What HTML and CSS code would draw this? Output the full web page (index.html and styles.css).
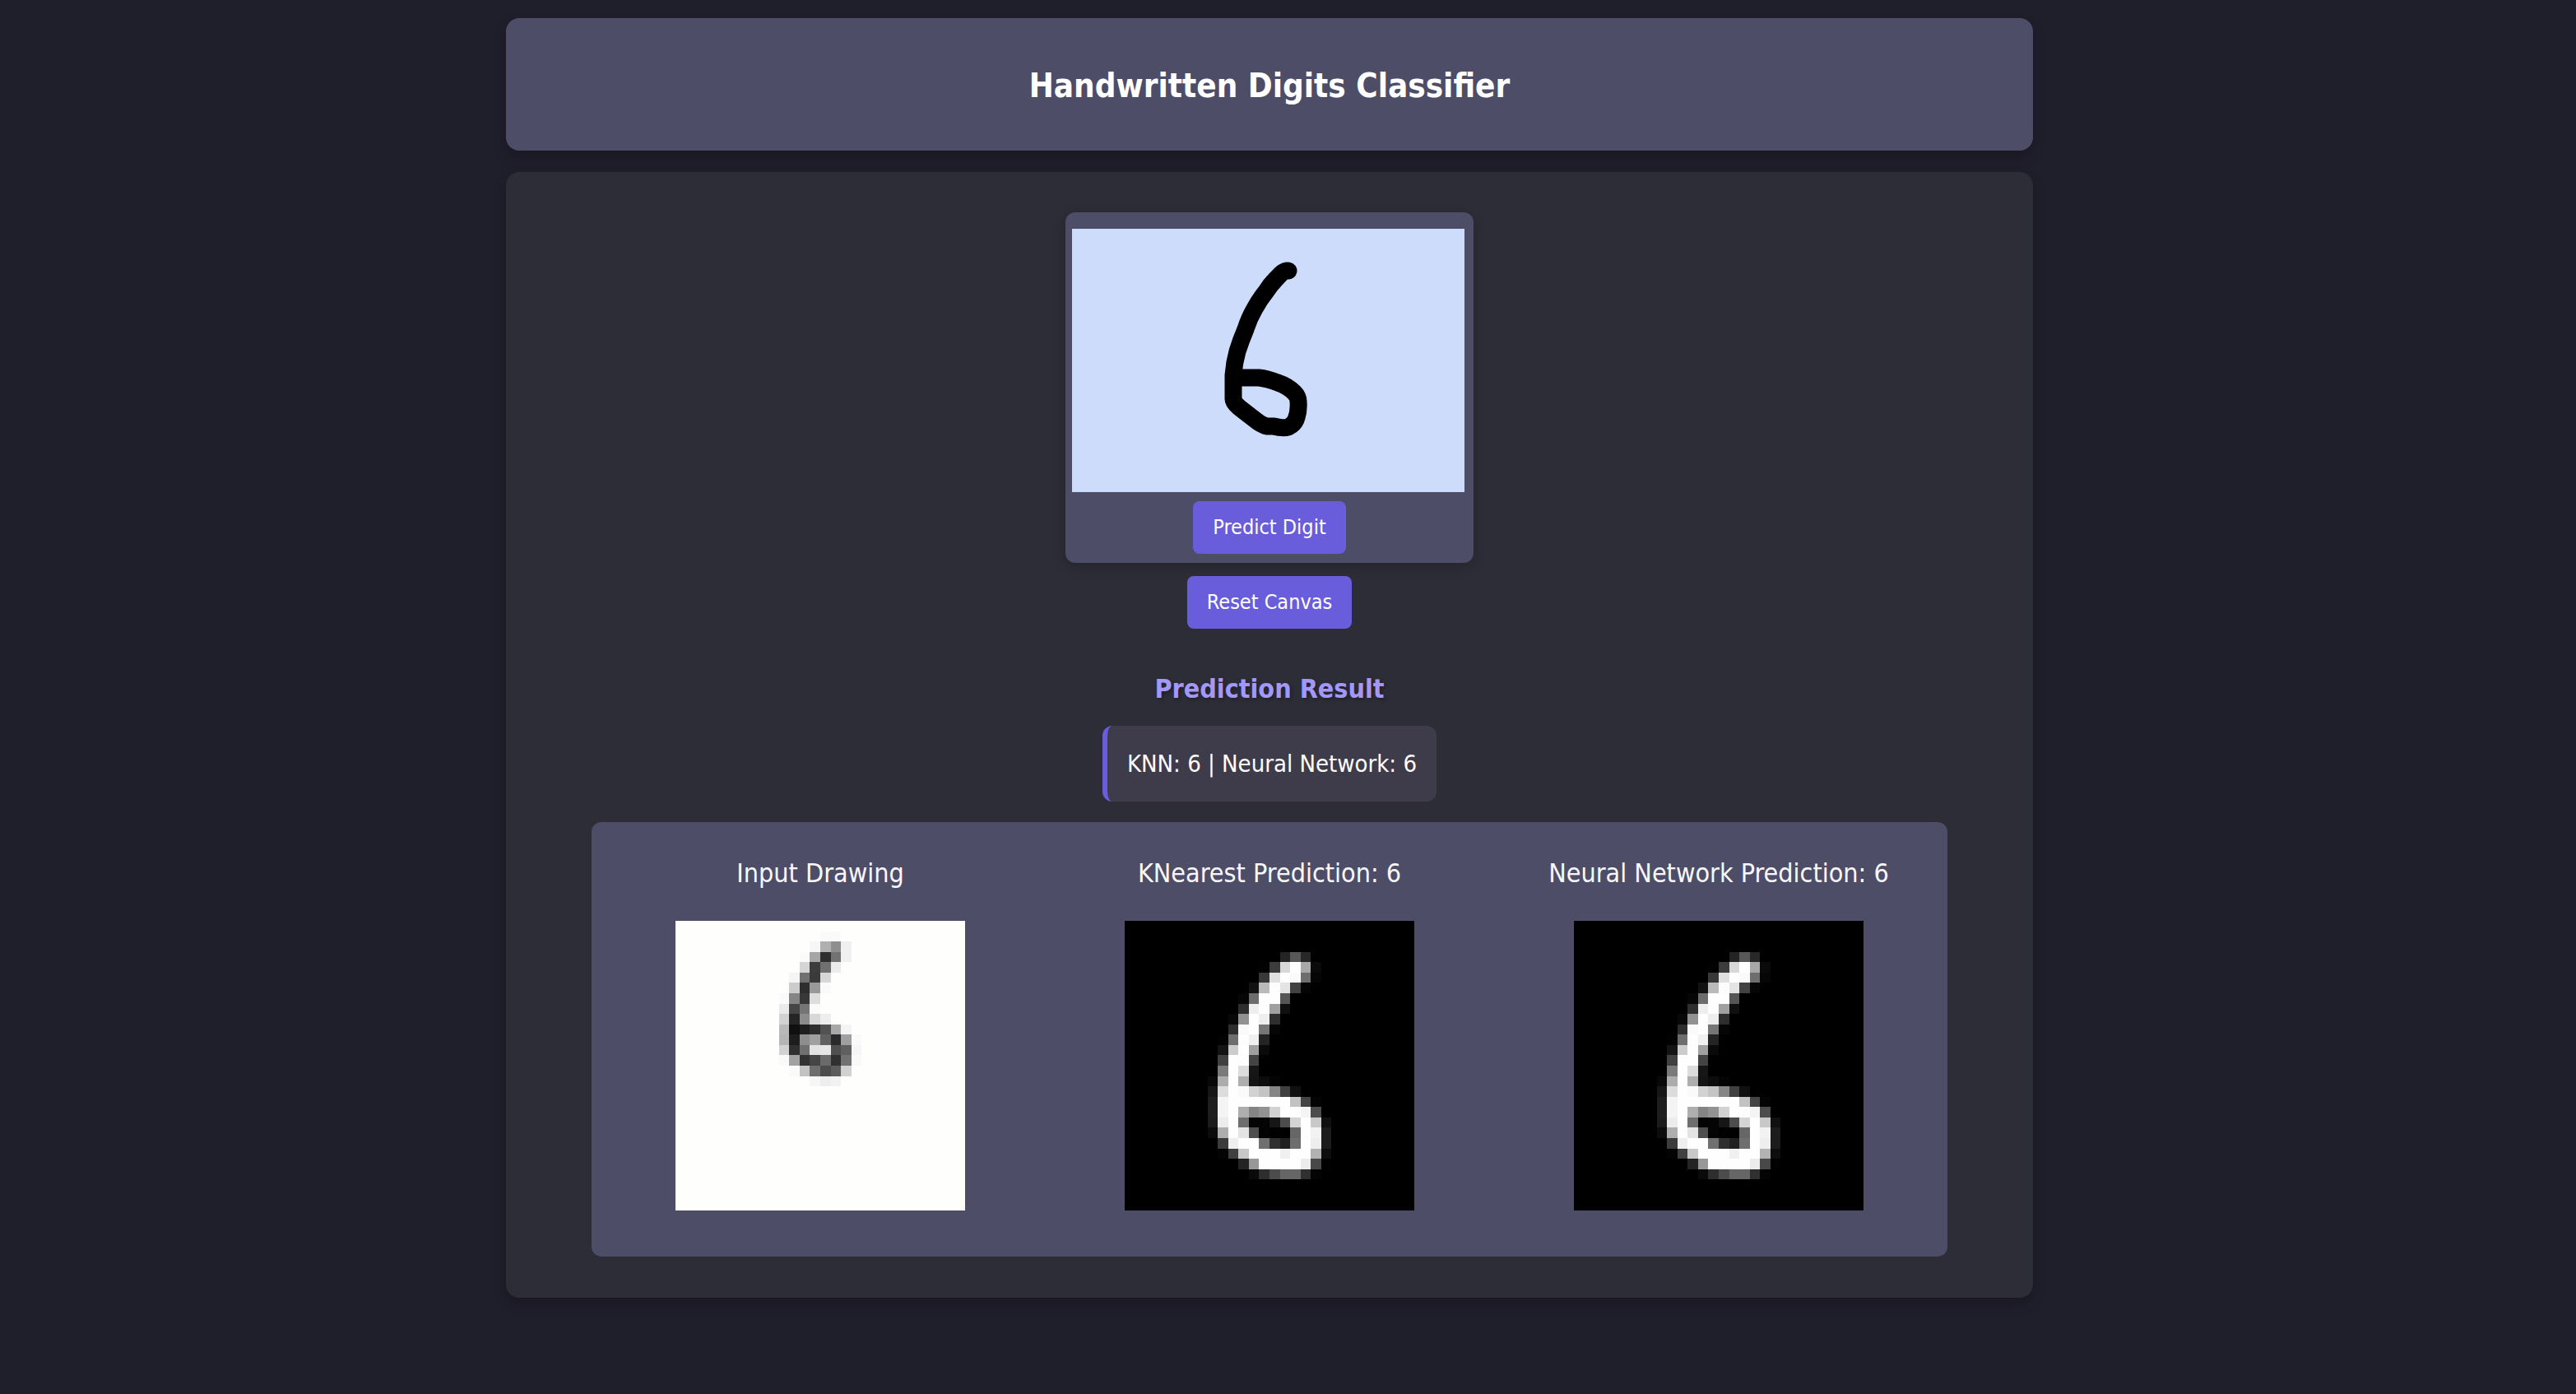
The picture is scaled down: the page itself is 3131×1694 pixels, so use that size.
FILE: index.html
```html
<!DOCTYPE html>
<html lang="en">
<head>
  <meta charset="utf-8">
  <meta name="viewport" content="width=device-width, initial-scale=1">
  <title>Handwritten Digits Classifier</title>
  <link rel="stylesheet" href="styles.css">
</head>
<body>
  <div class="page">
    <header class="header">
      <h1 class="title">Handwritten Digits Classifier</h1>
    </header>
    <main class="main">
      <form class="draw-card">
        <svg class="draw-area" viewBox="0 0 477 320" role="img" aria-label="Drawing canvas">
          <path class="stroke" d="M263 51C257 50 253 56 247 62Q241 68 236 76Q228 86 222 97Q215 109 211 122Q205 136 201 149Q197 163 196 178V207Q196 211 203 217L225 234Q232 239 237 240H245Q256 243 263 241Q270 237 272 232Q276 222 275 210Q275 204 270 199Q262 191 250 187Q237 182 227 181H196"/>
        </svg>
        <button class="button" type="button">Predict Digit</button>
      </form>
      <button class="button reset" type="button">Reset Canvas</button>
      <h2 class="result-title">Prediction Result</h2>
      <p class="result">KNN: 6 | Neural Network: 6</p>
      <section class="plots">
        <figure class="plot">
          <figcaption class="caption">Input Drawing</figcaption>
          <svg class="pixels paper" viewBox="0 0 28 28" data-digit="input" role="img" aria-label="Input drawing"></svg>
        </figure>
        <figure class="plot">
          <figcaption class="caption">KNearest Prediction: 6</figcaption>
          <svg class="pixels" viewBox="0 0 28 28" data-digit="scaled" role="img" aria-label="KNearest digit"></svg>
        </figure>
        <figure class="plot">
          <figcaption class="caption">Neural Network Prediction: 6</figcaption>
          <svg class="pixels" viewBox="0 0 28 28" data-digit="scaled" role="img" aria-label="Neural network digit"></svg>
        </figure>
      </section>
    </main>
  </div>
  <script src="digits.js"></script>
</body>
</html>
```
FILE: styles.css
```css
* {
  box-sizing: border-box;
}

body {
  margin: 0;
  padding: 22px 45px 22px 0;
  min-height: 100vh;
  background: #1f1e2b;
  color: #fff;
  font-family: Tahoma, "DejaVu Sans Condensed", "DejaVu Sans", sans-serif;
}

.page {
  display: flex;
  flex-direction: column;
  gap: 26px;
  max-width: 1856px;
  margin: 0 auto;
}

.header,
.main {
  border-radius: 16px;
  box-shadow: 0 8px 16px rgba(0, 0, 0, 0.2);
}

.header {
  padding: 58px 40px 55px;
  background: #4e4d68;
  text-align: center;
}

.title {
  margin: 0;
  font-size: 40px;
  line-height: 48px;
}

.main {
  display: flex;
  flex-direction: column;
  align-items: center;
  padding: 49px 104px 50px;
  background: #2d2d38;
}

.draw-card {
  display: flex;
  flex-direction: column;
  align-items: center;
  gap: 11px;
  width: 496px;
  max-width: 100%;
  padding: 20px 8px 11px;
  border-radius: 12px;
  background: #4e4d68;
  box-shadow: 0 4px 16px rgba(0, 0, 0, 0.2);
}

.draw-area {
  align-self: flex-start;
  width: 477px;
  max-width: 100%;
  background: #cedcfc;
}

.stroke {
  fill: none;
  stroke: #000;
  stroke-width: 21;
  stroke-linecap: round;
  stroke-linejoin: round;
}

.button {
  padding: 16px 24px;
  border: 0;
  border-radius: 8px;
  background: #6a5ddc;
  color: #fff;
  font: inherit;
  font-size: 25px;
  line-height: 32px;
  cursor: pointer;
}

.reset {
  margin-top: 16px;
}

.result-title {
  margin: 53px 0 25px;
  color: #a398f8;
  font-size: 32px;
  line-height: 40px;
  text-shadow: 2px 2px 4px rgba(0, 0, 0, 0.3);
}

.result {
  margin: 0 0 25px;
  padding: 28px 24px;
  border-left: 6px solid #6a5ddc;
  border-radius: 12px;
  background: #3e3c4a;
  font-size: 29px;
  line-height: 36px;
}

.plots {
  display: grid;
  grid-template-columns: repeat(3, 1fr);
  gap: 20px;
  width: 100%;
  padding: 42px 15px 56px;
  border-radius: 12px;
  background: #4e4d68;
}

.plot {
  display: flex;
  flex-direction: column;
  align-items: center;
  gap: 38px;
  margin: 0;
}

.caption {
  color: #f8f8fc;
  font-size: 32px;
  line-height: 40px;
}

.pixels {
  width: 352px;
  max-width: 100%;
  background: #000;
  shape-rendering: crispEdges;
}

.paper {
  background: #fefefc;
}
```
FILE: digits.js
```js
// Grey levels of each digit: [row, first column, hex levels from left to right].
const digits = {
  input: [
    [1, 14, "fa fa"],
    [2, 13, "f6 b0 8f f0"],
    [3, 12, "fb a6 2e 72 f0"],
    [4, 12, "d5 3c 70 eb"],
    [5, 11, "f5 70 3a d7"],
    [6, 11, "cc 2e 99 fa"],
    [7, 10, "fa 85 38 dd"],
    [8, 10, "ea 45 75 fa"],
    [9, 10, "d2 25 8c d8 ee"],
    [10, 10, "b9 10 1e 2e 52 a8 f4"],
    [11, 10, "b5 1d 8d a0 60 2a a0 fa"],
    [12, 10, "d2 30 70 e2 e5 50 60 f5"],
    [13, 10, "fa a2 32 45 6a 30 72 f9"],
    [14, 11, "fa c3 6e 4c 5c d1"],
    [15, 13, "f6 ee f2"]
  ],
  scaled: [
    [3, 15, "24 58 28"],
    [4, 13, "02 3c d8 fe a8 0a"],
    [5, 13, "38 e0 fe fa 6e 06"],
    [6, 12, "12 ba fe e4 42 06"],
    [7, 11, "06 6c fe fe 56"],
    [8, 11, "2e ee fe a0 10"],
    [9, 10, "08 92 fe ee 2e"],
    [10, 10, "2e fa fe 76 06"],
    [11, 9, "02 6e fe f0 24"],
    [12, 9, "14 cc fe a0 0a"],
    [13, 9, "40 fe fe 44"],
    [14, 9, "7a fe dc 16"],
    [15, 8, "08 ac fe ae 14 0c 04"],
    [16, 8, "16 dc fe fa d2 c4 86 40 10"],
    [17, 8, "1e f4 fe fe fe fe fe fe c2 44 04"],
    [18, 8, "1e f4 fe ae 84 92 d2 fe fe f4 4c"],
    [19, 8, "1c ec fe 6e 04 04 16 4c d4 fe c8 10"],
    [20, 8, "0c ae fe e4 4e 04 00 00 66 fe f2 1c"],
    [21, 9, "3c ee fe fe 70 30 20 6e fe ee 1c"],
    [22, 9, "04 40 c8 fe fe fe f0 fe fe b2 0e"],
    [23, 11, "24 98 fe fe fe fe ec 48 02"],
    [24, 12, "0a 2e 4c 66 66 30 04"]
  ]
};

document.querySelectorAll("[data-digit]").forEach((svg) => {
  for (const [row, start, levels] of digits[svg.dataset.digit]) {
    levels.split(" ").forEach((level, i) => {
      const cell = document.createElementNS("http://www.w3.org/2000/svg", "rect");
      cell.setAttribute("x", start + i);
      cell.setAttribute("y", row);
      cell.setAttribute("width", 1);
      cell.setAttribute("height", 1);
      cell.setAttribute("fill", "#" + level.repeat(3));
      svg.append(cell);
    });
  }
});
```
